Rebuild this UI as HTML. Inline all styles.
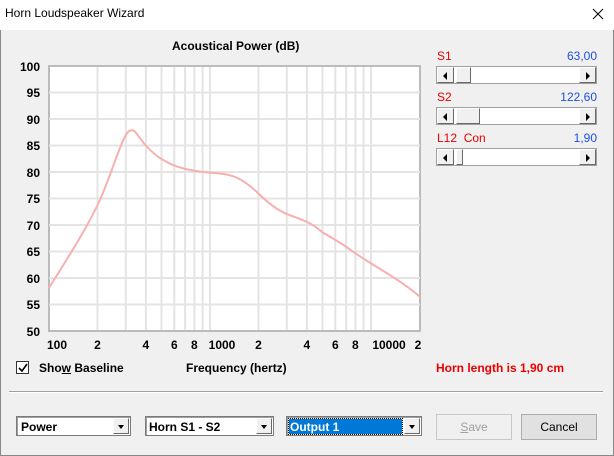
<!DOCTYPE html>
<html><head><meta charset="utf-8"><style>
*{margin:0;padding:0;box-sizing:border-box}
body{width:614px;height:456px;overflow:hidden;background:#f0f0f0;font-family:"Liberation Sans",sans-serif;font-size:12px;position:relative}
.t{position:absolute;white-space:nowrap}
.b{font-weight:bold}
.combo{position:absolute;height:20px;background:#fff;border:1px solid #7a7a7a;box-shadow:inset 1px 1px 0 #a0a0a0}
.combo .arr{position:absolute;right:1px;top:1px;width:16px;height:16px;background:#f0f0f0;border:1px solid #fff;border-right-color:#696969;border-bottom-color:#696969}
.combo .arr:after{content:"";position:absolute;left:4px;top:6px;border-left:3.5px solid transparent;border-right:3.5px solid transparent;border-top:4px solid #000}
.btn{position:absolute;height:26px;border:1px solid #adadad;background:#e1e1e1;text-align:center;line-height:24px}
.sb{position:absolute;left:436px;width:161px;height:18px;background:#fff;border:1px solid #a0a0a0}
.sb .a{position:absolute;top:0;width:17px;height:16px;background:#f0f0f0;border:1px solid #fff;border-right-color:#696969;border-bottom-color:#696969}
.sb .a.l{left:0}.sb .a.r{right:0}
.sb .a.l:after{content:"";position:absolute;left:5px;top:4px;border-top:4px solid transparent;border-bottom:4px solid transparent;border-right:4px solid #000}
.sb .a.r:after{content:"";position:absolute;left:6px;top:4px;border-top:4px solid transparent;border-bottom:4px solid transparent;border-left:4px solid #000}
.sb .th{position:absolute;top:0;height:16px;width:8px;background:#f0f0f0;border:1px solid #fff;border-right-color:#696969;border-bottom-color:#696969}
</style></head><body>
<div style="position:absolute;left:0;top:0;width:614px;height:30px;background:#fff"></div>
<div class="t" style="left:5px;top:6px;font-size:12px">Horn Loudspeaker Wizard</div>
<svg style="position:absolute;left:592px;top:8px" width="12" height="12"><path d="M1 1L11 11M11 1L1 11" stroke="#000" stroke-width="1"/></svg>
<div style="position:absolute;left:0;top:30px;width:1px;height:426px;background:#888"></div>
<div style="position:absolute;right:0;top:30px;width:1px;height:426px;background:#888"></div>
<div style="position:absolute;left:0;bottom:0;width:614px;height:1px;background:#888"></div>

<div class="t b" style="left:172px;top:39px">Acoustical Power (dB)</div>
<svg style="position:absolute;left:0;top:0" width="430" height="360" font-family="Liberation Sans" font-size="12" font-weight="bold">
<rect x="49" y="66" width="371" height="265" fill="#fff" stroke="#bbb" stroke-width="2"/>
<g stroke="#e4e4e4" stroke-width="2">
<line x1="49" x2="420" y1="92.5" y2="92.5"/><line x1="49" x2="420" y1="119" y2="119"/><line x1="49" x2="420" y1="145.5" y2="145.5"/><line x1="49" x2="420" y1="172" y2="172"/><line x1="49" x2="420" y1="198.5" y2="198.5"/><line x1="49" x2="420" y1="225" y2="225"/><line x1="49" x2="420" y1="251.5" y2="251.5"/><line x1="49" x2="420" y1="278" y2="278"/><line x1="49" x2="420" y1="304.5" y2="304.5"/>
<line x1="97.5" x2="97.5" y1="67" y2="330"/><line x1="125.8" x2="125.8" y1="67" y2="330"/><line x1="145.9" x2="145.9" y1="67" y2="330"/><line x1="161.5" x2="161.5" y1="67" y2="330"/><line x1="174.3" x2="174.3" y1="67" y2="330"/><line x1="185.1" x2="185.1" y1="67" y2="330"/><line x1="194.4" x2="194.4" y1="67" y2="330"/><line x1="202.6" x2="202.6" y1="67" y2="330"/><line x1="210" x2="210" y1="67" y2="330"/>
<line x1="258.5" x2="258.5" y1="67" y2="330"/><line x1="286.8" x2="286.8" y1="67" y2="330"/><line x1="306.9" x2="306.9" y1="67" y2="330"/><line x1="322.5" x2="322.5" y1="67" y2="330"/><line x1="335.3" x2="335.3" y1="67" y2="330"/><line x1="346.1" x2="346.1" y1="67" y2="330"/><line x1="355.4" x2="355.4" y1="67" y2="330"/><line x1="363.6" x2="363.6" y1="67" y2="330"/><line x1="371" x2="371" y1="67" y2="330"/>
</g>
<path d="M49 288 C65 262 85 232 100 200 C112 172 122 138 128 132 C131 129 134 130 137 134 C143 143 152 154 165 161 C180 170 200 172 215 173 C232 174 242 178 258 193 C272 207 282 213 295 217 C305 221 312 223 322 232 C335 240 342 243 352 251 C365 260 372 264 385 272 C398 280 410 288 420 297" fill="none" stroke="#f7b0ae" stroke-width="2"/>
<g text-anchor="end" fill="#000"><text x="40" y="71">100</text><text x="40" y="97">95</text><text x="40" y="124">90</text><text x="40" y="150">85</text><text x="40" y="177">80</text><text x="40" y="203">75</text><text x="40" y="230">70</text><text x="40" y="256">65</text><text x="40" y="283">60</text><text x="40" y="309">55</text><text x="40" y="336">50</text></g>
<g text-anchor="middle"><text x="57" y="349">100</text><text x="97.5" y="349">2</text><text x="145.9" y="349">4</text><text x="174.3" y="349">6</text><text x="194.4" y="349">8</text><text x="222" y="349">1000</text><text x="258.5" y="349">2</text><text x="306.9" y="349">4</text><text x="335.3" y="349">6</text><text x="355.4" y="349">8</text><text x="389" y="349">10000</text><text x="418" y="349">2</text></g>
</svg>

<div class="t" style="left:437px;top:49px;color:#e00">S1</div><div class="t" style="right:17px;top:49px;color:#1e50e0">63,00</div>
<div class="sb" style="top:66px"><div class="a l"></div><div class="th" style="left:19px;width:15px"></div><div class="a r"></div></div>
<div class="t" style="left:437px;top:90px;color:#e00">S2</div><div class="t" style="right:17px;top:90px;color:#1e50e0">122,60</div>
<div class="sb" style="top:107px"><div class="a l"></div><div class="th" style="left:19px;width:24px"></div><div class="a r"></div></div>
<div class="t" style="left:437px;top:131px;color:#e00">L12&nbsp; Con</div><div class="t" style="right:17px;top:131px;color:#1e50e0">1,90</div>
<div class="sb" style="top:148px"><div class="a l"></div><div class="th" style="left:19px;width:7px"></div><div class="a r"></div></div>

<div style="position:absolute;left:16px;top:361px;width:13px;height:13px;background:#fff;border:1px solid #333"></div>
<svg style="position:absolute;left:18px;top:363px" width="10" height="10"><path d="M1 5L4 8L9 1" stroke="#000" stroke-width="1.6" fill="none"/></svg>
<div class="t b" style="left:39px;top:361px">Sho<u>w</u> Baseline</div>
<div class="t b" style="left:186px;top:361px">Frequency (hertz)</div>
<div class="t b" style="left:436px;top:361px;color:#e00">Horn length is 1,90 cm</div>

<div style="position:absolute;left:9px;top:391px;width:594px;height:1px;background:#a0a0a0"></div>
<div style="position:absolute;left:9px;top:392px;width:594px;height:1px;background:#fff"></div>

<div class="combo" style="left:16px;top:416px;width:115px"><span class="t b" style="left:4px;top:3px">Power</span><div class="arr"></div></div>
<div class="combo" style="left:145px;top:416px;width:129px"><span class="t b" style="left:3px;top:3px">Horn S1 - S2</span><div class="arr"></div></div>
<div class="combo" style="left:286px;top:416px;width:136px"><div style="position:absolute;left:2px;top:2px;width:113px;height:15px;background:#0078d7;outline:1px dotted #000"></div><span class="t b" style="left:3px;top:3px;color:#fff">Output 1</span><div class="arr"></div></div>
<div class="btn" style="left:436px;top:414px;width:76px;color:#a0a0a0;background:#f0f0f0;border-color:#c8c8c8"><u>S</u>ave</div>
<div class="btn" style="left:521px;top:414px;width:76px">Cancel</div>
</body></html>
